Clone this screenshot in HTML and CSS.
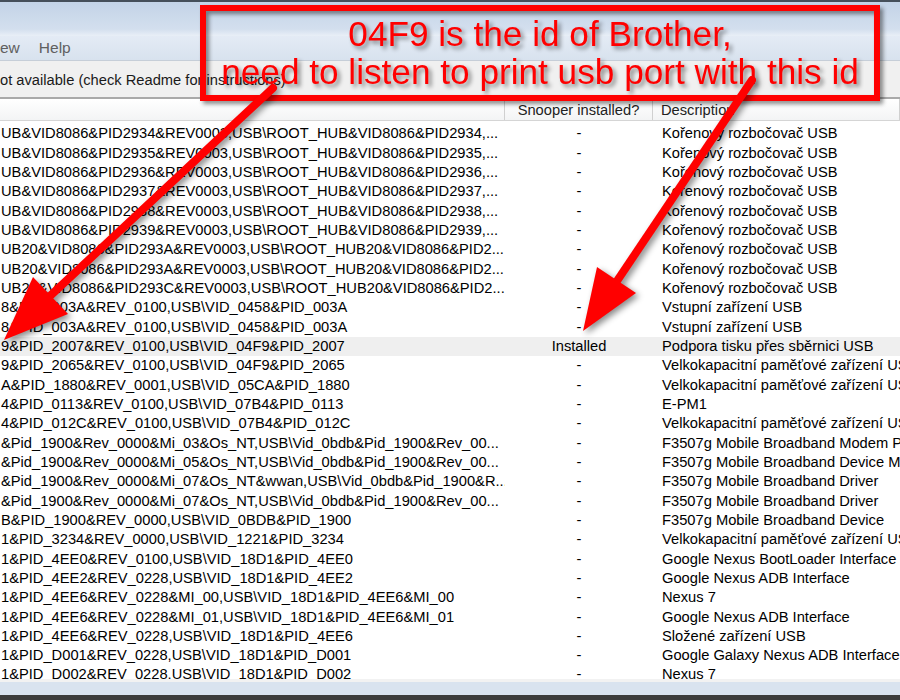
FILE: index.html
```html
<!DOCTYPE html>
<html>
<head>
<meta charset="utf-8">
<link rel="stylesheet" href="styles.css">
</head>
<body>
<div class="window">
  <div class="titlebar"></div>
  <div class="menubar"><span>ew</span><span>Help</span></div>
  <div class="status">ot available (check Readme for instructions)</div>
  <div class="list">
    <div class="header">
      <div class="h1"></div>
      <div class="h2">Snooper installed?</div>
      <div class="h3">Description</div>
    </div>
    <div class="rows">
      <div class="row"><div class="c1">UB&amp;VID8086&amp;PID2934&amp;REV0003,USB\ROOT_HUB&amp;VID8086&amp;PID2934,...</div><div class="c2">-</div><div class="c3">Kořenový rozbočovač USB</div></div>
      <div class="row"><div class="c1">UB&amp;VID8086&amp;PID2935&amp;REV0003,USB\ROOT_HUB&amp;VID8086&amp;PID2935,...</div><div class="c2">-</div><div class="c3">Kořenový rozbočovač USB</div></div>
      <div class="row"><div class="c1">UB&amp;VID8086&amp;PID2936&amp;REV0003,USB\ROOT_HUB&amp;VID8086&amp;PID2936,...</div><div class="c2">-</div><div class="c3">Kořenový rozbočovač USB</div></div>
      <div class="row"><div class="c1">UB&amp;VID8086&amp;PID2937&amp;REV0003,USB\ROOT_HUB&amp;VID8086&amp;PID2937,...</div><div class="c2">-</div><div class="c3">Kořenový rozbočovač USB</div></div>
      <div class="row"><div class="c1">UB&amp;VID8086&amp;PID2938&amp;REV0003,USB\ROOT_HUB&amp;VID8086&amp;PID2938,...</div><div class="c2">-</div><div class="c3">Kořenový rozbočovač USB</div></div>
      <div class="row"><div class="c1">UB&amp;VID8086&amp;PID2939&amp;REV0003,USB\ROOT_HUB&amp;VID8086&amp;PID2939,...</div><div class="c2">-</div><div class="c3">Kořenový rozbočovač USB</div></div>
      <div class="row"><div class="c1">UB20&amp;VID8086&amp;PID293A&amp;REV0003,USB\ROOT_HUB20&amp;VID8086&amp;PID2...</div><div class="c2">-</div><div class="c3">Kořenový rozbočovač USB</div></div>
      <div class="row"><div class="c1">UB20&amp;VID8086&amp;PID293A&amp;REV0003,USB\ROOT_HUB20&amp;VID8086&amp;PID2...</div><div class="c2">-</div><div class="c3">Kořenový rozbočovač USB</div></div>
      <div class="row"><div class="c1">UB20&amp;VID8086&amp;PID293C&amp;REV0003,USB\ROOT_HUB20&amp;VID8086&amp;PID2...</div><div class="c2">-</div><div class="c3">Kořenový rozbočovač USB</div></div>
      <div class="row"><div class="c1">8&amp;PID_003A&amp;REV_0100,USB\VID_0458&amp;PID_003A</div><div class="c2">-</div><div class="c3">Vstupní zařízení USB</div></div>
      <div class="row"><div class="c1">8&amp;PID_003A&amp;REV_0100,USB\VID_0458&amp;PID_003A</div><div class="c2">-</div><div class="c3">Vstupní zařízení USB</div></div>
      <div class="row sel"><div class="c1">9&amp;PID_2007&amp;REV_0100,USB\VID_04F9&amp;PID_2007</div><div class="c2">Installed</div><div class="c3">Podpora tisku přes sběrnici USB</div></div>
      <div class="row"><div class="c1">9&amp;PID_2065&amp;REV_0100,USB\VID_04F9&amp;PID_2065</div><div class="c2">-</div><div class="c3">Velkokapacitní paměťové zařízení USB</div></div>
      <div class="row"><div class="c1">A&amp;PID_1880&amp;REV_0001,USB\VID_05CA&amp;PID_1880</div><div class="c2">-</div><div class="c3">Velkokapacitní paměťové zařízení USB</div></div>
      <div class="row"><div class="c1">4&amp;PID_0113&amp;REV_0100,USB\VID_07B4&amp;PID_0113</div><div class="c2">-</div><div class="c3">E-PM1</div></div>
      <div class="row"><div class="c1">4&amp;PID_012C&amp;REV_0100,USB\VID_07B4&amp;PID_012C</div><div class="c2">-</div><div class="c3">Velkokapacitní paměťové zařízení USB</div></div>
      <div class="row"><div class="c1">&amp;Pid_1900&amp;Rev_0000&amp;Mi_03&amp;Os_NT,USB\Vid_0bdb&amp;Pid_1900&amp;Rev_00...</div><div class="c2">-</div><div class="c3">F3507g Mobile Broadband Modem Port</div></div>
      <div class="row"><div class="c1">&amp;Pid_1900&amp;Rev_0000&amp;Mi_05&amp;Os_NT,USB\Vid_0bdb&amp;Pid_1900&amp;Rev_00...</div><div class="c2">-</div><div class="c3">F3507g Mobile Broadband Device Management</div></div>
      <div class="row"><div class="c1">&amp;Pid_1900&amp;Rev_0000&amp;Mi_07&amp;Os_NT&amp;wwan,USB\Vid_0bdb&amp;Pid_1900&amp;R...</div><div class="c2">-</div><div class="c3">F3507g Mobile Broadband Driver</div></div>
      <div class="row"><div class="c1">&amp;Pid_1900&amp;Rev_0000&amp;Mi_07&amp;Os_NT,USB\Vid_0bdb&amp;Pid_1900&amp;Rev_00...</div><div class="c2">-</div><div class="c3">F3507g Mobile Broadband Driver</div></div>
      <div class="row"><div class="c1">B&amp;PID_1900&amp;REV_0000,USB\VID_0BDB&amp;PID_1900</div><div class="c2">-</div><div class="c3">F3507g Mobile Broadband Device</div></div>
      <div class="row"><div class="c1">1&amp;PID_3234&amp;REV_0000,USB\VID_1221&amp;PID_3234</div><div class="c2">-</div><div class="c3">Velkokapacitní paměťové zařízení USB</div></div>
      <div class="row"><div class="c1">1&amp;PID_4EE0&amp;REV_0100,USB\VID_18D1&amp;PID_4EE0</div><div class="c2">-</div><div class="c3">Google Nexus BootLoader Interface</div></div>
      <div class="row"><div class="c1">1&amp;PID_4EE2&amp;REV_0228,USB\VID_18D1&amp;PID_4EE2</div><div class="c2">-</div><div class="c3">Google Nexus ADB Interface</div></div>
      <div class="row"><div class="c1">1&amp;PID_4EE6&amp;REV_0228&amp;MI_00,USB\VID_18D1&amp;PID_4EE6&amp;MI_00</div><div class="c2">-</div><div class="c3">Nexus 7</div></div>
      <div class="row"><div class="c1">1&amp;PID_4EE6&amp;REV_0228&amp;MI_01,USB\VID_18D1&amp;PID_4EE6&amp;MI_01</div><div class="c2">-</div><div class="c3">Google Nexus ADB Interface</div></div>
      <div class="row"><div class="c1">1&amp;PID_4EE6&amp;REV_0228,USB\VID_18D1&amp;PID_4EE6</div><div class="c2">-</div><div class="c3">Složené zařízení USB</div></div>
      <div class="row"><div class="c1">1&amp;PID_D001&amp;REV_0228,USB\VID_18D1&amp;PID_D001</div><div class="c2">-</div><div class="c3">Google Galaxy Nexus ADB Interface</div></div>
      <div class="row"><div class="c1">1&amp;PID_D002&amp;REV_0228,USB\VID_18D1&amp;PID_D002</div><div class="c2">-</div><div class="c3">Nexus 7</div></div>
    </div>
  </div>
  <div class="bottom"></div>

  <div class="callout">
    <div>04F9 is the id of Brother,</div>
    <div>need to listen to print usb port with this id</div>
  </div>

  <svg class="arrows" width="900" height="700" viewBox="0 0 900 700">
    <line x1="273" y1="88" x2="50" y2="296" stroke="#ff0000" stroke-width="8" stroke-linecap="round"/>
    <polygon points="4,340 68,314 33,277" fill="#ff0000"/>
    <line x1="752" y1="80" x2="617" y2="281" stroke="#ff0000" stroke-width="8" stroke-linecap="round"/>
    <polygon points="583,331 636,293 597,267" fill="#ff0000"/>
  </svg>
</div>
</body>
</html>
```

FILE: styles.css
```css
* { box-sizing: border-box; }
html, body { margin: 0; padding: 0; }
body {
  width: 900px;
  height: 700px;
  overflow: hidden;
  font-family: "Liberation Sans", Arial, sans-serif;
  font-size: 14.7px;
  color: #000;
  background: #fff;
}
.window {
  position: relative;
  width: 900px;
  height: 700px;
  overflow: hidden;
  display: flex;
  flex-direction: column;
}
.titlebar {
  height: 36px;
  flex: none;
  border-top: 2px solid #454f5a;
  background: linear-gradient(#c3d3e7, #d3dfee 80%, #e9eff7);
}
.menubar {
  height: 25px;
  flex: none;
  display: flex;
  align-items: center;
  gap: 19px;
  background: linear-gradient(#e4ebf5, #d8e2ee);
  border-bottom: 1px solid #c6ced8;
  color: #606060;
  font-size: 15.5px;
}
.status {
  height: 36px;
  flex: none;
  display: flex;
  align-items: center;
  padding-top: 2px;
  background: #f0f0f0;
  color: #1a1a1a;
}
.list {
  height: 582px;
  flex: none;
  border-top: 2px solid #a9a9a9;
  background: #fff;
  overflow: hidden;
}
.header {
  height: 22px;
  display: grid;
  grid-template-columns: 505px 148px 1fr;
  border-bottom: 1px solid #d5d5d5;
  background: linear-gradient(#ffffff, #f3f4f5);
  color: #222;
}
.header > div {
  display: flex;
  align-items: center;
  padding-top: 1px;
  border-right: 1px solid #d0d0d0;
}
.h2 { justify-content: center; }
.h3 { padding-left: 8px; border-right: none; }
.rows { padding-top: 3.3px; }
.row {
  display: grid;
  grid-template-columns: 505px 148px 1fr;
  height: 19.33px;
  line-height: 19.33px;
  white-space: nowrap;
}
.row > div { overflow: hidden; min-width: 0; }
.row.sel { background: #efefef; }
.c1 { padding-left: 1px; }
.c2 { text-align: center; }
.c3 { padding-left: 9px; }
.bottom {
  flex: 1;
  background: linear-gradient(#f2f2f2 0 3px, #d9e3ef 3px 16px, #3c3c3c 16px);
}
.callout {
  position: absolute;
  left: 200px;
  top: 5px;
  width: 680px;
  height: 96px;
  border: 6px solid #ff0000;
  color: #ff0000;
  font-size: 35.2px;
  line-height: 38px;
  padding-top: 4px;
  text-align: center;
  white-space: nowrap;
  filter: drop-shadow(3px 3px 2px rgba(0, 0, 0, 0.45));
}
.arrows {
  position: absolute;
  left: 0;
  top: 0;
  filter: drop-shadow(3px 3px 3px rgba(0, 0, 0, 0.45));
}
```
